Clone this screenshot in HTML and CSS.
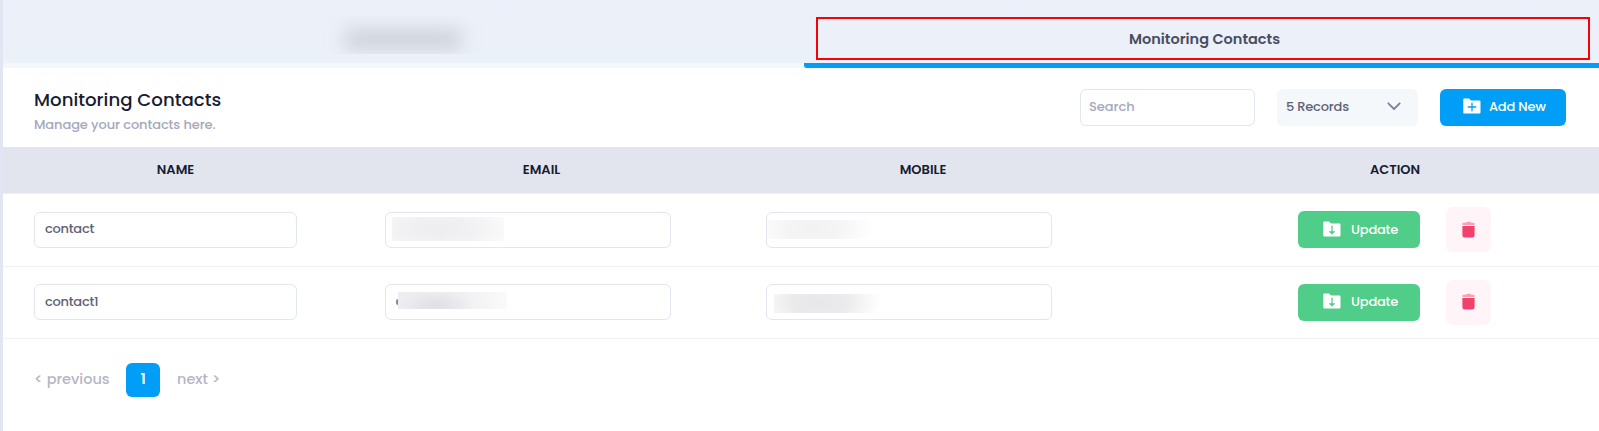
FILE: index.html
```html
<!DOCTYPE html>
<html lang="en">
<head>
<meta charset="utf-8">
<title>Monitoring Contacts</title>
<link rel="stylesheet" href="styles.css">
</head>
<body>
<svg class="defs" aria-hidden="true">
  <symbol id="folder-plus" viewBox="0 0 18 16"><path fill="#fff" d="M1 .5h5l2 2h8.500a1 1 0 0 1 1 1V14.500a1 1 0 0 1-1 1H1a.7.7 0 0 1-.7-.7V1.200A.7.7 0 0 1 1 .5z"/><path stroke="#009ef7" stroke-width="1.300" stroke-linecap="round" d="M9 5.200v7.600M5.200 9h7.600"/></symbol>
  <symbol id="folder-down" viewBox="0 0 18 16"><path fill="#fff" d="M1 .5h5l2 2h8.500a1 1 0 0 1 1 1V14.500a1 1 0 0 1-1 1H1a.7.7 0 0 1-.7-.7V1.200A.7.7 0 0 1 1 .5z"/><path stroke="#50cd89" stroke-width="1.300" stroke-linecap="round" d="M9 5.200v5.300"/><path fill="#50cd89" d="M5.700 10.300h6.600L9.400 13.300q-.4.400-.8 0z"/></symbol>
  <symbol id="trash" viewBox="0 0 13 17"><path fill="#f1416c" d="M.4 5.100h12.200v9.100a2.300 2.300 0 0 1-2.300 2.300H2.700A2.300 2.300 0 0 1 .4 14.200z"/><path fill="#f9a0b6" d="M.4 4V2.700q0-.9.900-.9h2.500q.5-1 1.800-1h1.800q1.300 0 1.800 1h2.500q.9 0 .9.900V4z"/></symbol>
</svg>
<div class="page">
  <nav class="tabs">
    <div class="tab"><span class="smudge smudge-tab"><span class="smudge-ink"></span></span></div>
    <div class="tab active"><span class="outline"><span>Monitoring Contacts</span></span></div>
  </nav>
  <header class="head">
    <div class="titles">
      <h1>Monitoring Contacts</h1>
      <p>Manage your contacts here.</p>
    </div>
    <div class="search"><span>Search</span></div>
    <div class="select"><span>5 Records</span><svg width="14" height="9" viewBox="0 0 14 9"><path d="M1.300 1.300 7 7l5.700-5.700" fill="none" stroke="#7e8299" stroke-width="1.800" stroke-linecap="round" stroke-linejoin="round"/></svg></div>
    <div class="btn add"><svg width="18" height="16"><use href="#folder-plus"/></svg><span>Add New</span></div>
  </header>
  <div class="row thead">
    <div>NAME</div><div>EMAIL</div><div>MOBILE</div><div>ACTION</div>
  </div>
  <div class="row tr">
    <div><div class="input"><span>contact</span></div></div>
    <div><div class="input"><span class="smudge e1"></span></div></div>
    <div><div class="input"><span class="smudge m1"></span></div></div>
    <div class="actions"><div class="btn update"><svg width="18" height="16"><use href="#folder-down"/></svg><span>Update</span></div><div class="del"><svg width="13" height="17"><use href="#trash"/></svg></div></div>
  </div>
  <div class="row tr second">
    <div><div class="input"><span>contact1</span></div></div>
    <div><div class="input"><span class="sliver"></span><span class="smudge e2"></span></div></div>
    <div><div class="input"><span class="smudge m2"></span></div></div>
    <div class="actions"><div class="btn update"><svg width="18" height="16"><use href="#folder-down"/></svg><span>Update</span></div><div class="del"><svg width="13" height="17"><use href="#trash"/></svg></div></div>
  </div>
  <footer class="pager"><span class="prev">&lt; previous</span><span class="cur">1</span><span class="next">next &gt;</span></footer>
</div>
</body>
</html>
```
FILE: styles.css
```css
* { box-sizing: border-box; }
body { margin: 0; font-family: Poppins, Inter, sans-serif; font-size: 13px; font-weight: 500; color: #5e6278; background: #fff; }
.defs { position: absolute; width: 0; height: 0; }
.page { width: 1599px; height: 431px; overflow: hidden; border-left: 3px solid #e1e6f2; white-space: nowrap; }
span { flex: none; }

.tabs { display: flex; height: 68px; margin-left: -2px; background: linear-gradient(#ebf0fa 0, #ebf0f9 70%, #ecf2f7 92%); }
.tab { width: 803px; height: 68px; border-bottom: 5px solid #f4f7fa; padding: 16px 0 0 322px; }
.tab.active { width: 795px; border-bottom: 5px solid #009ef7; border-radius: 0 0 0 3px; padding: 17px 9px 3px 12px; }
.outline { display: flex; justify-content: center; align-items: center; height: 43px; padding: 2px 0 0 3px; border: 2px solid #fa0006; font-size: 14.5px; font-weight: 600; color: #4a4d61; }
.smudge { display: block; }
.smudge-tab { width: 162px; height: 38px; overflow: hidden; padding: 13px 0 0 22px; }
.smudge-ink { display: block; width: 116px; height: 21px; background: #cfd2da; filter: blur(9px); }

.head { display: flex; height: 79px; padding: 21px 33px 0 31px; align-items: flex-start; }
.titles { flex: 1; }
h1 { margin: 0; font-size: 18.2px; line-height: 22px; font-weight: 500; color: #181c32; }
p { margin: 5px 0 0; line-height: 18px; color: #a5a8bb; letter-spacing: -.1px; }
.search, .select, .btn { display: flex; align-items: center; height: 37px; border-radius: 6px; }
.search { width: 175px; border: 1px solid #e4e6ef; padding: 0 0 2px 8px; color: #a5a8bb; margin-right: 22px; letter-spacing: -.05px; }
.select { width: 141px; background: #f4f8fb; padding: 0 17px 2px 9px; justify-content: space-between; margin-right: 22px; letter-spacing: -.2px; }
.btn { color: #fff; letter-spacing: -.2px; }
.btn svg { margin-top: -1px; }
.add { width: 126px; background: #009ef7; padding-left: 23px; gap: 8px; padding-bottom: 2px; }

.row { display: grid; grid-template-columns: 345px 387px 456px 408px; }
.thead { height: 47px; background: #e2e5ee; border-bottom: 1px solid #eef0f5; font-weight: 600; color: #181c32; }
.thead > div { display: flex; align-items: center; justify-content: center; }
.thead > div:nth-child(3) { padding-right: 80px; }
.tr { height: 73px; border-bottom: 1px solid #eff2f5; padding-top: 18px; }
.tr.second { height: 72px; padding-top: 17px; }
.tr > div:nth-child(1) { padding-left: 31px; }
.tr > div:nth-child(2) { padding-left: 37px; }
.tr > div:nth-child(3) { padding-left: 31px; }
.input { display: flex; align-items: flex-start; width: 286px; height: 36px; border: 1px solid #e4e6ef; border-radius: 6px; letter-spacing: -.25px; }
.tr > div:nth-child(1) .input { width: 263px; align-items: center; padding: 0 0 3px 10px; }
.tr.second > div:nth-child(1) .input { padding-bottom: 1px; }
.e1 { width: 112px; height: 24px; margin: 4px 0 0 6px; background: radial-gradient(ellipse 65% 110% at 40% 50%, #ededf0, #f1f1f3 50%, #fafafb 100%); }
.m1 { width: 106px; height: 19px; margin-top: 7px; background: radial-gradient(ellipse 58% 200% at 43% 40%, #f2f2f3, #f4f4f5 40%, #fdfdfd 90%, #fff); }
.sliver { width: 2px; height: 6px; margin: 14px 0 0 10px; border-radius: 3px 0 0 3px; background: #8d86a0; }
.e2 { width: 109px; height: 17px; margin-top: 7px; background: radial-gradient(ellipse 36px 16px at 38px 14px, #dfdfe4, transparent), linear-gradient(90deg, #ededf1, #f0f0f2 60%, #fafafb); }
.m2 { width: 106px; height: 19px; margin: 9px 0 0 7px; background: radial-gradient(ellipse 60% 180% at 42% 45%, #e7e7ea, #ebebed 45%, #fafafa 85%, #fff); }
.actions { display: flex; align-items: flex-start; padding-left: 107px; }
.update { width: 122px; background: #50cd89; padding-left: 24px; gap: 11px; margin-top: -1px; }
.update svg { margin-left: .5px; margin-right: -.5px; }
.second .update { margin-top: 0; padding-bottom: 2px; }
.del { display: flex; align-items: center; justify-content: center; width: 45px; height: 45px; margin: -5px 0 0 26px; border-radius: 7px; background: #fff5f8; }
.second .del { margin-top: -4px; padding: 0 0 2px; }

.pager { display: flex; align-items: center; height: 34px; margin: 24px 0 0 31px; font-size: 14.5px; color: #b5b5c3; }
.prev { width: 92px; padding-bottom: 1px; }
.cur { width: 34px; height: 34px; line-height: 32px; text-align: center; font-weight: 600; color: #fff; background: #009ef7; border-radius: 6px; }
.next { margin-left: 17px; padding-bottom: 1px; }
```
